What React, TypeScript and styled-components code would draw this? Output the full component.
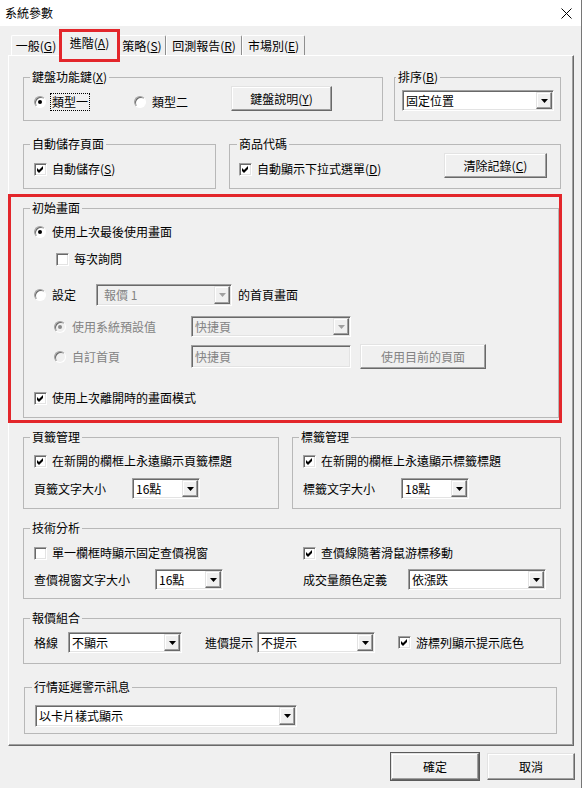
import styled, { createGlobalStyle, css } from "styled-components";

const RED = "#e3262b";
const GRAY_TEXT = "#838383";

const GlobalStyle = createGlobalStyle`
  html, body {
    margin: 0;
    padding: 0;
    background: #f0f0f0;
  }
  body {
    font-family: "Noto Sans CJK TC", "Noto Sans", sans-serif;
    font-size: 12px;
    color: #000;
  }
  *, *::before, *::after {
    box-sizing: border-box;
  }
  u {
    text-underline-offset: 1px;
  }
`;

const Window = styled.div`
  width: 582px;
  height: 788px;
  display: flex;
  flex-direction: column;
  background: #f0f0f0;
  border-right: 1px solid #767676;
  overflow: hidden;
`;

const TitleBar = styled.div`
  height: 26px;
  flex: none;
  display: flex;
  align-items: center;
  justify-content: space-between;
  padding: 0 9px 0 5px;
  background: #fff;
  line-height: 16px;
`;

const Body = styled.div`
  flex: 1;
  display: flex;
  flex-direction: column;
  padding: 0 7px 0 8px;
`;

const TabStrip = styled.div`
  height: 29px;
  flex: none;
  display: flex;
  align-items: flex-end;
  padding-left: 3px;
  position: relative;
  z-index: 1;
`;

const Tab = styled.div<{ $w: number; $active?: boolean }>`
  position: relative;
  width: ${(p) => p.$w}px;
  height: 20px;
  flex: none;
  display: flex;
  align-items: center;
  justify-content: center;
  line-height: 16px;
  white-space: nowrap;
  background: #f0f0f0;
  border-top: 1px solid #fff;
  border-left: 1px solid #fff;
  border-right: 1px solid #8e8e8e;
  border-radius: 2px 2px 0 0;

  ${(p) =>
    p.$active &&
    css`
      height: 25px;
      margin: 0 -2px -1px;
      padding-bottom: 2px;
      z-index: 2;

      &::after {
        content: "";
        position: absolute;
        left: -1px;
        right: -1px;
        top: -3px;
        bottom: -6px;
        border: 3px solid ${RED};
      }
    `}
`;

const Panel = styled.div`
  height: 691px;
  flex: none;
  display: flex;
  flex-direction: column;
  padding: 14px 12px 0 14px;
  border: 1px solid;
  border-color: #fff #696969 #696969 #fff;
  box-shadow: inset -1px -1px 0 #a0a0a0;
`;

const GroupRow = styled.div<{ $mt?: number }>`
  display: flex;
  margin-top: ${(p) => p.$mt ?? 0}px;
`;

const Group = styled.fieldset<{ $w?: number; $pad: string; $ml?: number; $mr?: number }>`
  margin: 0 ${(p) => p.$mr ?? 0}px 0 ${(p) => p.$ml ?? 0}px;
  min-width: 0;
  padding: ${(p) => p.$pad};
  border: 1px solid #b8b8b8;
  ${(p) =>
    p.$w
      ? css`
          width: ${p.$w}px;
          flex: none;
        `
      : css`
          flex: 1;
        `}
`;

const Legend = styled.legend<{ $ml?: number }>`
  height: 14px;
  padding: 0 2px;
  margin-left: ${(p) => p.$ml ?? -4}px;
  line-height: 14px;
`;

const Highlight = styled.div`
  margin: 5px -1px 0 -15px;
  padding: 4px 0 2px 12px;
  border: 3px solid ${RED};
`;

const Line = styled.div<{ $mt?: number; $pl?: number; $end?: boolean; $between?: boolean }>`
  display: flex;
  align-items: ${(p) => (p.$end ? "flex-end" : "center")};
  justify-content: ${(p) => (p.$between ? "space-between" : "flex-start")};
  margin-top: ${(p) => p.$mt ?? 0}px;
  padding-left: ${(p) => p.$pl ?? 0}px;
`;

const Grid = styled.div`
  display: grid;
  grid-template-columns: 269px auto;
  row-gap: 7px;
`;

const Option = styled.label<{ $w?: number; $ml?: number; $off?: boolean }>`
  display: flex;
  align-items: center;
  flex: none;
  height: 18px;
  line-height: 16px;
  white-space: nowrap;
  margin-left: ${(p) => p.$ml ?? 0}px;
  color: ${(p) => (p.$off ? GRAY_TEXT : "#000")};
  ${(p) => p.$w && `width: ${p.$w}px;`}
`;

const Focus = styled.span`
  margin-left: -2px;
  padding: 0 1px;
  border: 1px dotted #000;
  line-height: 16px;
`;

const Radio = styled.span<{ $on?: boolean; $off?: boolean }>`
  position: relative;
  width: 12px;
  height: 12px;
  flex: none;
  margin-right: 6px;
  border-radius: 50%;
  background: ${(p) => (p.$off ? "#f0f0f0" : "#fff")};
  border: 1px solid;
  border-color: #a0a0a0 #fff #fff #a0a0a0;
  box-shadow: inset 1px 1px 0 #696969;

  &::after {
    content: "";
    display: ${(p) => (p.$on ? "block" : "none")};
    position: absolute;
    left: 3px;
    top: 3px;
    width: 4px;
    height: 4px;
    border-radius: 50%;
    background: ${(p) => (p.$off ? "#8a8a8a" : "#000")};
  }
`;

const CheckBox = styled.span`
  width: 13px;
  height: 13px;
  flex: none;
  margin-right: 5px;
  display: flex;
  align-items: center;
  justify-content: center;
  background: #fff;
  border: 1px solid;
  border-color: #a0a0a0 #fff #fff #a0a0a0;
  box-shadow: inset 1px 1px 0 #696969, inset -1px -1px 0 #e3e3e3;
`;

const Check = ({ on }: { on?: boolean }) => (
  <CheckBox>
    {on && (
      <svg width="9" height="9" viewBox="0 0 9 9">
        <polygon points="1,3 3,5 7,1 7,4 3,8 1,6" fill="#000" />
      </svg>
    )}
  </CheckBox>
);

const FieldLabel = styled.span<{ $w?: number; $ml?: number }>`
  flex: none;
  line-height: 16px;
  white-space: nowrap;
  margin-left: ${(p) => p.$ml ?? 0}px;
  ${(p) => p.$w && `width: ${p.$w}px;`}
`;

const Field = styled.div<{ $w: number; $h: number; $off?: boolean }>`
  width: ${(p) => p.$w}px;
  height: ${(p) => p.$h}px;
  flex: none;
  display: flex;
  padding: 1px;
  background: ${(p) => (p.$off ? "#f0f0f0" : "#fff")};
  border: 1px solid;
  border-color: #a0a0a0 #fff #fff #a0a0a0;
  box-shadow: inset 1px 1px 0 #696969, inset -1px -1px 0 #e3e3e3;
`;

const FieldValue = styled.span<{ $pl?: number; $off?: boolean }>`
  flex: 1;
  display: flex;
  align-items: center;
  padding-left: ${(p) => p.$pl ?? 2}px;
  line-height: 16px;
  white-space: nowrap;
  color: ${(p) => (p.$off ? GRAY_TEXT : "#000")};
`;

const DropButton = styled.span`
  width: 16px;
  flex: none;
  display: flex;
  align-items: center;
  justify-content: center;
  background: #f0f0f0;
  border: 1px solid;
  border-color: #e3e3e3 #696969 #696969 #e3e3e3;
  box-shadow: inset -1px -1px 0 #a0a0a0, inset 1px 1px 0 #fff;
`;

type ComboProps = {
  w: number;
  h: number;
  value: string;
  off?: boolean;
  pl?: number;
};

const ComboBox = ({ w, h, value, off, pl }: ComboProps) => (
  <Field $w={w} $h={h} $off={off}>
    <FieldValue $pl={pl} $off={off}>
      {value}
    </FieldValue>
    <DropButton>
      <svg width="7" height="4" viewBox="0 0 7 4">
        <polygon points="0,0 7,0 3.5,4" fill={off ? "#a0a0a0" : "#000"} />
      </svg>
    </DropButton>
  </Field>
);

const Btn = styled.button<{ $w: number; $h?: number; $ml?: number; $off?: boolean; $def?: boolean }>`
  width: ${(p) => p.$w}px;
  height: ${(p) => p.$h ?? 25}px;
  flex: none;
  margin: 0 0 0 ${(p) => p.$ml ?? 0}px;
  padding: 0;
  font: inherit;
  line-height: 16px;
  color: ${(p) => (p.$off ? GRAY_TEXT : "#000")};
  background: #f0f0f0;
  border: 1px solid;
  border-color: #e3e3e3 #696969 #696969 #e3e3e3;
  box-shadow: inset -1px -1px 0 #a0a0a0, inset 1px 1px 0 #fff;
  ${(p) => p.$def && `outline: 1px solid #5a5a5a;`}
`;

const Footer = styled.div`
  display: flex;
  justify-content: flex-end;
  gap: 8px;
  margin: 7px -1px 0 0;
`;

const CloseIcon = () => (
  <svg width="11" height="11" viewBox="0 0 11 11">
    <path d="M0.5 0.5 L10.5 10.5 M10.5 0.5 L0.5 10.5" stroke="#000" strokeWidth="1" />
  </svg>
);

const App = () => (
  <>
    <GlobalStyle />
    <Window>
      <TitleBar>
        <span>系統參數</span>
        <CloseIcon />
      </TitleBar>
      <Body>
        <TabStrip>
          <Tab $w={50}>一般(<u>G</u>)</Tab>
          <Tab $w={61} $active>
            進階(<u>A</u>)
          </Tab>
          <Tab $w={48}>策略(<u>S</u>)</Tab>
          <Tab $w={76}>回測報告(<u>R</u>)</Tab>
          <Tab $w={63}>市場別(<u>E</u>)</Tab>
        </TabStrip>
        <Panel>
          <GroupRow>
            <Group $w={360} $mr={11} $pad="2px 10px 9px">
              <Legend>鍵盤功能鍵(<u>X</u>)</Legend>
              <Line $end>
                <Option>
                  <Radio $on />
                  <Focus>類型一</Focus>
                </Option>
                <Option $ml={44}>
                  <Radio />
                  類型二
                </Option>
                <Btn $w={101} $ml={43}>
                  鍵盤說明(<u>Y</u>)
                </Btn>
              </Line>
            </Group>
            <Group $pad="6px 7px 9px">
              <Legend $ml={-6}>排序(<u>B</u>)</Legend>
              <ComboBox w={152} h={21} value="固定位置" />
            </Group>
          </GroupRow>

          <GroupRow $mt={16}>
            <Group $w={193} $mr={13} $pad="9px 10px 10px">
              <Legend>自動儲存頁面</Legend>
              <Line>
                <Option>
                  <Check on />
                  自動儲存(<u>S</u>)
                </Option>
              </Line>
            </Group>
            <Group $pad="2px 13px 10px 9px">
              <Legend $ml={-2}>商品代碼</Legend>
              <Line $end $between>
                <Option>
                  <Check on />
                  自動顯示下拉式選單(<u>D</u>)
                </Option>
                <Btn $w={103}>
                  清除記錄(<u>C</u>)
                </Btn>
              </Line>
            </Group>
          </GroupRow>

          <Highlight>
            <Group $pad="8px 0 10px 10px">
              <Legend>初始畫面</Legend>
              <Line>
                <Option>
                  <Radio $on />
                  使用上次最後使用畫面
                </Option>
              </Line>
              <Line $mt={9} $pl={22}>
                <Option>
                  <Check />
                  每次詢問
                </Option>
              </Line>
              <Line $mt={16}>
                <Option $w={62}>
                  <Radio />
                  設定
                </Option>
                <ComboBox w={136} h={22} value="報價 1" off pl={6} />
                <FieldLabel $ml={6}>的首頁畫面</FieldLabel>
              </Line>
              <Line $mt={10} $pl={20}>
                <Option $w={137} $off>
                  <Radio $on $off />
                  使用系統預設值
                </Option>
                <ComboBox w={160} h={21} value="快捷頁" off />
              </Line>
              <Line $mt={7} $pl={20}>
                <Option $w={137} $off>
                  <Radio $off />
                  自訂首頁
                </Option>
                <Field $w={160} $h={23} $off>
                  <FieldValue $off>快捷頁</FieldValue>
                </Field>
                <Btn $w={126} $ml={9} $off>
                  使用目前的頁面
                </Btn>
              </Line>
              <Line $mt={20}>
                <Option>
                  <Check on />
                  使用上次離開時的畫面模式
                </Option>
              </Line>
            </Group>
          </Highlight>

          <GroupRow $mt={7}>
            <Group $w={256} $mr={13} $pad="8px 10px 9px">
              <Legend>頁籤管理</Legend>
              <Line>
                <Option>
                  <Check on />
                  在新開的欄框上永遠顯示頁籤標題
                </Option>
              </Line>
              <Line $mt={8}>
                <FieldLabel $w={98}>頁籤文字大小</FieldLabel>
                <ComboBox w={68} h={21} value="16點" />
              </Line>
            </Group>
            <Group $pad="8px 10px 9px">
              <Legend>標籤管理</Legend>
              <Line>
                <Option>
                  <Check on />
                  在新開的欄框上永遠顯示標籤標題
                </Option>
              </Line>
              <Line $mt={8}>
                <FieldLabel $w={98}>標籤文字大小</FieldLabel>
                <ComboBox w={68} h={21} value="18點" />
              </Line>
            </Group>
          </GroupRow>

          <GroupRow $mt={12}>
            <Group $pad="9px 14px 8px 10px">
              <Legend>技術分析</Legend>
              <Grid>
                <Line>
                  <Option>
                    <Check />
                    單一欄框時顯示固定查價視窗
                  </Option>
                </Line>
                <Line>
                  <Option>
                    <Check on />
                    查價線隨著滑鼠游標移動
                  </Option>
                </Line>
                <Line>
                  <FieldLabel $w={121}>查價視窗文字大小</FieldLabel>
                  <ComboBox w={68} h={21} value="16點" />
                </Line>
                <Line>
                  <FieldLabel $w={105}>成交量顏色定義</FieldLabel>
                  <ComboBox w={138} h={21} value="依漲跌" />
                </Line>
              </Grid>
            </Group>
          </GroupRow>

          <GroupRow $mt={12}>
            <Group $pad="7px 10px 10px">
              <Legend>報價組合</Legend>
              <Line>
                <FieldLabel $w={34}>格線</FieldLabel>
                <ComboBox w={114} h={21} value="不顯示" />
                <FieldLabel $w={52} $ml={23}>
                  進價提示
                </FieldLabel>
                <ComboBox w={118} h={21} value="不提示" />
                <Option $ml={23}>
                  <Check on />
                  游標列顯示提示底色
                </Option>
              </Line>
            </Group>
          </GroupRow>

          <GroupRow $mt={16}>
            <Group $ml={1} $mr={4} $pad="11px 10px 6px">
              <Legend $ml={-3}>行情延遲警示訊息</Legend>
              <ComboBox w={262} h={22} value="以卡片樣式顯示" />
            </Group>
          </GroupRow>
        </Panel>
        <Footer>
          <Btn $w={88} $h={27} $def>
            確定
          </Btn>
          <Btn $w={88} $h={27}>
            取消
          </Btn>
        </Footer>
      </Body>
    </Window>
  </>
);

export default App;
